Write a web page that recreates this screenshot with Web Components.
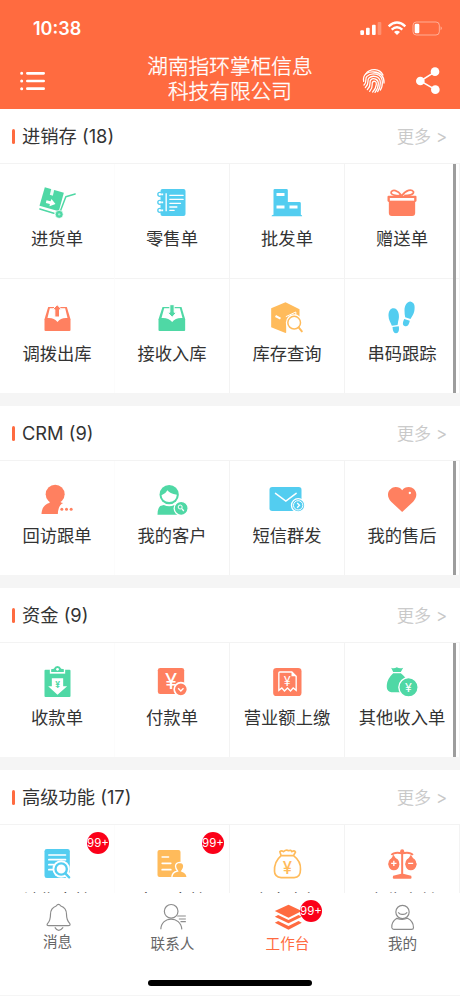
<!DOCTYPE html>
<html lang="zh-CN">
<head>
<meta charset="utf-8">
<meta name="viewport" content="width=device-width, initial-scale=1">
<title>工作台</title>
<style>
html, body {
  height: 100%;
  margin: 0;
  overflow: hidden;
}

body {
  --brand: #ff6b40;
  --coral: #ff8060;
  --green: #4fd8a5;
  --blue: #53cdf0;
  --yellow: #ffbb5b;
  --line: #f3f3f3;
  background: #ffffff;
  color: #333333;
  font-family: Inter, 'Noto Sans CJK SC', sans-serif;
}
</style>
</head>
<body>

<work-bench></work-bench>

<script>
// Icon artwork: view box, then shapes
const ICONS = {
  menu: ['57 211 81 66', `
    <g stroke="currentColor" stroke-width="8" stroke-linecap="round">
      <path d="M82 221H131M82 244H131M82 267H131"/><path d="M65 221h.1M65 244h.1M65 267h.1" stroke-width="9"/>
    </g>`],
  fingerprint: ['396 206 72 78', `
    <g fill="none" stroke="currentColor" stroke-width="3.8" stroke-linecap="round">
      <path d="M407 224Q417 210 435 211Q451 212 459 227"/>
      <path d="M401 246C397 221 417 217 432 218C452 219 463 232 462 251"/>
      <path d="M402 257C413 247 403 238 411 231C424 218 457 221 457 249C457 259 456 266 451 272"/>
      <path d="M406 265C421 249 409 243 417 236C428 226 451 231 451 250C451 263 447 271 443 277"/>
      <path d="M412 271C427 254 416 249 422 242C430 234 445 240 445 252C445 264 440 273 435 279"/>
      <path d="M419 276C433 260 423 254 428 248C433 243 440 247 439 255C438 265 433 273 428 278"/>
    </g>`],
  share: ['554 200 78 87', `
    <path d="M615 217L570 245L615 271" fill="none" stroke="currentColor" stroke-width="4.5"/>
    <g fill="currentColor"><circle cx="614" cy="217" r="13"/><circle cx="570" cy="245" r="13"/><circle cx="615" cy="271" r="13"/></g>`],
  signal: ['387 60 69 48', `
    <g fill="currentColor"><rect x="391" y="91" width="11" height="14" rx="3"/><rect x="408" y="83" width="11" height="22" rx="3"/>
    <rect x="426" y="74" width="11" height="31" rx="3"/><rect x="443" y="66" width="11" height="39" rx="3" opacity=".25"/></g>`],
  wifi: ['471 60 60 48', `
    <g fill="none" stroke="currentColor" stroke-width="7"><path d="M476 79Q501 56 526 79"/><path d="M485 89Q501 75 517 89"/></g>
    <path d="M492 96Q501 89 510 96L501 105Z" fill="currentColor"/>`],
  battery: ['543 60 96 48', `
    <rect x="549" y="66" width="79" height="39" rx="10" fill="none" stroke="currentColor" stroke-width="3" opacity=".45"/>
    <path d="M632 79Q638 85 632 91Z" fill="currentColor" opacity=".6"/><rect x="554" y="71" width="14" height="29" rx="4" fill="currentColor"/>`],

  purchase: ['112.5 84 120 108', `
    <path d="M136 94L193 110L178 166L120 149Z" fill="currentColor"/>
    <path d="M156 95L165 98L160 119L151 116Z" fill="#fff" opacity=".9"/>
    <path d="M141 133L153 136L156 129L168 144L150 151L151 144L139 141Z" fill="#fff"/>
    <path d="M121 159L163 172M183 164L199 122L227 114" stroke="currentColor" stroke-width="4.5" fill="none" stroke-linecap="round" stroke-linejoin="round"/>
    <circle cx="179" cy="175" r="12" fill="currentColor" stroke="#fff" stroke-width="2"/><circle cx="179" cy="175" r="3.5" fill="#fff" opacity=".5"/>`],
  retail: ['457.5 84 120 108', `
    <rect x="483" y="99" width="75" height="81" rx="6" fill="currentColor"/>
    <g fill="#fff" stroke="currentColor" stroke-width="4"><circle cx="481" cy="115" r="6"/><circle cx="481" cy="139" r="6"/><circle cx="481" cy="163" r="6"/></g>
    <path d="M485 115h6M485 139h6M485 163h6" stroke="#fff" stroke-width="5"/>
    <path d="M500 112V166" stroke="#fff" stroke-width="4"/>
    <path d="M511 118H551M511 130H551M511 142H543M511 153H532M511 163H524" stroke="#fff" stroke-width="4" stroke-linecap="round"/>`],
  wholesale: ['112.5 84 120 108', `
    <path d="M136 99H171Q175 99 175 103V138H210Q214 138 214 142V176Q218 176 218 181H126Q126 176 132 176V103Q132 99 136 99Z" fill="currentColor"/>
    <path d="M141 115.5H165M141 153H165M180 153H204" stroke="#fff" stroke-width="9"/>`],
  gift: ['457.5 84 120 108', `
    <g fill="none" stroke="currentColor" stroke-width="5"><path d="M517 119C503 101 490 100 485 108C482 116 498 120 517 119"/><path d="M517 119C530 101 546 99 552 107C554 117 536 119 524 119"/><path d="M514 115L508 119"/></g>
    <path d="M477 119H558Q561 119 561 122V134Q561 137 557 138V171Q557 180 548 180H487Q478 180 478 171V138Q474 137 474 134V122Q474 119 477 119Z" fill="currentColor"/>
    <path d="M481 130H554" stroke="#fff" stroke-width="8"/>`],
  trayOut: ['112.5 69 120 108', `
    <path d="M146 93H202L213 130V162Q213 165 210 165H138Q135 165 135 162V130Z" fill="currentColor"/>
    <path d="M151 97H197L204 126Q184 124 174 138Q163 124 144 126Z" fill="#fff"/>
    <path d="M173 86L187 101H180V123H166V101H159Z" fill="currentColor" stroke="#fff" stroke-width="3"/>`],
  trayIn: ['457.5 69 120 108', `
    <path d="M489 93H546L557 130V162Q557 165 554 165H480Q477 165 477 162V130Z" fill="currentColor"/>
    <path d="M494 97H541L549 126Q529 124 518 138Q506 124 486 126Z" fill="#fff"/>
    <path d="M518 124L531 109H524V86H511V109H504Z" fill="currentColor" stroke="#fff" stroke-width="3"/>`],
  stock: ['112.5 69 120 108', `
    <path d="M125 97L168 79L210 100V153L168 171L125 154Z" fill="currentColor"/>
    <path d="M138 120L153 128" stroke="#fff" stroke-width="6"/><path d="M169 122L199 108V118" stroke="#fff" stroke-width="3" fill="none"/>
    <circle cx="194" cy="140" r="25" fill="#fff"/><path d="M170 140V171L206 175L224 162V130Z" fill="#fff"/>
    <circle cx="194" cy="140" r="19" fill="none" stroke="currentColor" stroke-width="4.5"/><path d="M208 155L217 166" stroke="currentColor" stroke-width="6" stroke-linecap="round"/>`],
  steps: ['457.5 69 120 108', `
    <g fill="currentColor"><path d="M492 97C507 97 512 120 506 136Q505 145 504 147L487 149C484 139 477 132 477 119C477 105 483 97 492 97Z"/>
    <path d="M489 153L508 151Q511 171 500 172Q490 172 489 153Z"/>
    <path d="M544 77C535 75 525 87 525 103Q525 114 527 124L543 129C548 119 553 116 555 101C557 87 553 79 544 77Z"/>
    <path d="M524 129L541 134Q537 154 525 150Q516 147 524 129Z"/></g>`],

  visit: ['112.5 198 120 108', `
    <g fill="currentColor"><circle cx="167" cy="238" r="28.5"/><path d="M126 297C127 276 138 267 150 264L152 250H181Q178 262 191 264Q176 271 175 297Z"/>
    <circle cx="187" cy="283" r="4.5"/><circle cx="201" cy="283" r="4.5"/><circle cx="215" cy="283" r="4.5"/></g>`],
  customer: ['457.5 198 120 108', `
    <circle cx="509" cy="239" r="29" fill="currentColor"/><path d="M486 241Q498 237 504 226Q510 236 532 239Q530 260 509 261Q488 260 486 241Z" fill="#fff"/>
    <path d="M474 299Q474 280 482 273L493 270Q509 278 525 270L534 272V299Z" fill="currentColor"/>
    <circle cx="545" cy="280" r="21" fill="currentColor" stroke="#fff" stroke-width="4"/><circle cx="542" cy="276" r="6" fill="none" stroke="#fff" stroke-width="3"/><path d="M547 281L553 288" stroke="#fff" stroke-width="4"/>`],
  sms: ['112.5 198 120 108', `
    <rect x="120" y="216" width="96" height="72" rx="8" fill="currentColor"/><path d="M138 235L169 258L200 235" fill="none" stroke="#fff" stroke-width="4.5" stroke-linecap="round"/>
    <circle cx="206" cy="271" r="20" fill="currentColor" stroke="#fff" stroke-width="4"/><circle cx="206" cy="271" r="14" fill="none" stroke="#fff" stroke-width="3"/><path d="M203 264L210 271L203 278" fill="none" stroke="#fff" stroke-width="4"/>`],
  heart: ['457.5 198 120 108', `
    <path d="M518 291L485 260C463 236 484 215 499 216Q511 216 518 226Q525 216 538 216C554 216 572 236 551 260Z" fill="currentColor"/><circle cx="541" cy="234" r="3.5" fill="#fff"/>`],

  receipt: ['112.5 189 120 108', `
    <rect x="135" y="209" width="78" height="82" rx="3" fill="currentColor"/>
    <path d="M151 207V221H197V207" fill="#fff"/><path d="M155 216V208Q160 206 163 206Q166 198 174 198Q182 198 185 206Q192 206 193 208V216Z" fill="currentColor"/><circle cx="174" cy="208" r="4" fill="#fff"/>
    <path d="M157 235H191V259H203L174 284L146 259H157Z" fill="#fff"/><text x="174" y="263" font-size="25" font-weight="700" text-anchor="middle" fill="currentColor">¥</text>`],
  payment: ['457.5 189 120 108', `
    <rect x="475" y="204" width="79" height="78" rx="7" fill="currentColor"/><text x="515" y="267" font-size="66" text-anchor="middle" fill="#fff">¥</text>
    <circle cx="544" cy="268" r="20" fill="currentColor" stroke="#fff" stroke-width="5"/><path d="M536 265L544 273L552 265" fill="none" stroke="#fff" stroke-width="4"/>`],
  turnover: ['112.5 189 120 108', `
    <rect x="131" y="204" width="85" height="84" rx="10" fill="currentColor"/>
    <path d="M148 219Q148 216 151 216H187L200 229V271L191 264L183 273L174 264L165 273L157 264L148 271Z" fill="none" stroke="#fff" stroke-width="4"/><path d="M186 215V229H201Z" fill="#fff"/>
    <text x="173" y="257" font-size="38" text-anchor="middle" fill="#fff">¥</text>`],
  income: ['457.5 189 120 108', `
    <path d="M485 203Q493 207 502 202Q511 207 521 203L514 216H491ZM491 220H514C526 230 535 238 534 262Q534 277 511 277H492C473 277 471 266 472 254Q474 236 491 220Z" fill="currentColor"/>
    <circle cx="537" cy="262" r="29" fill="currentColor" stroke="#fff" stroke-width="4"/><text x="537" y="275" font-size="37" text-anchor="middle" fill="#fff">¥</text>`],

  audit: ['112.5 195 120 108', `
    <rect x="135" y="207" width="76" height="87" rx="7" fill="currentColor"/><path d="M148 225H198M148 239H198M148 254H162M148 269H159" stroke="#fff" stroke-width="5" stroke-linecap="round"/>
    <circle cx="185" cy="267" r="26" fill="#fff"/><path d="M190 281L203 298H216V276Z" fill="#fff"/><circle cx="185" cy="267" r="17" fill="none" stroke="currentColor" stroke-width="7"/><path d="M198 281L209 292" stroke="currentColor" stroke-width="7" stroke-linecap="round"/>`],
  staff: ['457.5 195 120 108', `
    <rect x="474" y="210" width="69" height="81" rx="6" fill="currentColor"/><path d="M488 231H507M488 250H514M488 269H514" stroke="#fff" stroke-width="5" stroke-linecap="round"/>
    <path d="M517 293Q517 277 534 273Q528 265 528 258Q529 248 540 247Q552 247 553 258Q553 266 547 273Q563 278 563 293Z" fill="currentColor" stroke="#fff" stroke-width="4"/>`],
  moneybag: ['112.5 195 120 108', `
    <path d="M155 227L151 215Q156 210 162 215Q170 208 177 212Q185 209 187 215Q195 210 198 216L192 227C204 236 214 250 213 268Q213 293 194 293H155Q135 291 135 274C134 253 143 237 155 227H193" fill="none" stroke="currentColor" stroke-width="5" stroke-linejoin="round"/>
    <text x="174" y="283" font-size="50" font-weight="500" text-anchor="middle" fill="currentColor">¥</text>`],
  balance: ['457.5 195 120 108', `
    <g fill="currentColor"><circle cx="518" cy="214" r="6"/><path d="M515 212H521V281L545 287Q548 296 543 296H493Q488 296 491 287L515 281Z"/>
    <path d="M492 224L476 252Q479 271 493 271Q508 271 510 252ZM544 224L527 252Q530 271 544 271Q558 271 562 252Z"/><circle cx="493" cy="249" r="16"/><circle cx="544" cy="249" r="16"/></g>
    <path d="M486 225Q494 215 518 220Q542 215 550 225" fill="none" stroke="currentColor" stroke-width="6"/>
    <path d="M485 250H501M493 242V258M536 250H551" stroke="#fff" stroke-width="4"/>`],

  bell: ['112.5 366 120 90', `
    <g fill="none" stroke="currentColor" stroke-width="3.5"><path d="M167 378Q174 368 181 378C193 382 198 390 198 403C198 420 202 425 208 431Q211 437 203 437H145Q137 437 141 431C147 425 150 417 150 403C150 390 156 382 167 378Z"/><path d="M163 442Q174 460 188 442"/></g>`],
  contact: ['457.5 366 120 90', `
    <g fill="none" stroke="currentColor" stroke-width="3.5"><circle cx="512" cy="394" r="20.5"/><path d="M481 448C482 407 541 407 544 448M530 408H556M535 417H556M540 425H556"/></g>`],
  layers: ['112.5 366 120 90', `
    <g fill="currentColor"><path d="M133 393L174 374L214 393L174 413Z"/><path d="M133 410L143 405L174 420L204 405L214 410L174 430Z"/><path d="M133 428L143 423L174 438L204 423L214 428L174 449Z"/></g>`],
  mine: ['457.5 366 120 90', `
    <g fill="none" stroke="currentColor" stroke-width="3.5"><circle cx="516" cy="396" r="20"/><path d="M503 397Q509 404 516 403Q524 404 530 397M499 415C487 423 483 433 484 443Q485 448 490 448H543Q549 448 549 443C549 430 543 421 531 415Q516 421 499 415Z"/></g>`]
};

const SECTIONS = [
  {title: '进销存', count: 18, items: [
    {icon: 'purchase', label: '进货单', color: 'green'},
    {icon: 'retail', label: '零售单', color: 'blue'},
    {icon: 'wholesale', label: '批发单', color: 'blue'},
    {icon: 'gift', label: '赠送单', color: 'coral'},
    {icon: 'trayOut', label: '调拨出库', color: 'coral'},
    {icon: 'trayIn', label: '接收入库', color: 'green'},
    {icon: 'stock', label: '库存查询', color: 'yellow'},
    {icon: 'steps', label: '串码跟踪', color: 'blue'}
  ]},
  {title: 'CRM', count: 9, items: [
    {icon: 'visit', label: '回访跟单', color: 'coral'},
    {icon: 'customer', label: '我的客户', color: 'green'},
    {icon: 'sms', label: '短信群发', color: 'blue'},
    {icon: 'heart', label: '我的售后', color: 'coral'}
  ]},
  {title: '资金', count: 9, items: [
    {icon: 'receipt', label: '收款单', color: 'green'},
    {icon: 'payment', label: '付款单', color: 'coral'},
    {icon: 'turnover', label: '营业额上缴', color: 'coral'},
    {icon: 'income', label: '其他收入单', color: 'green'}
  ]},
  {title: '高级功能', count: 17, items: [
    {icon: 'audit', label: '销售审核', color: 'blue', badge: '99+'},
    {icon: 'staff', label: '客服审核', color: 'yellow', badge: '99+'},
    {icon: 'moneybag', label: '资金余额', color: 'yellow'},
    {icon: 'balance', label: '应收应付', color: 'coral'}
  ]}
];

// Attach an open shadow root holding the given markup
function attach( host, html ) {
  const template = document.createElement( 'template' );
  template.innerHTML = html;
  const root = host.attachShadow( {mode: 'open'} );
  root.appendChild( template.content.cloneNode( true ) );
  return root;
}

class AppIcon extends HTMLElement {
  connectedCallback() {
    if( this.shadowRoot ) return;
    const [box, art] = ICONS[this.getAttribute( 'name' )];
    attach( this, `
    <style>
    :host {
      display: block;
      flex: none;
    }

    svg {
      display: block;
      height: 100%;
      width: 100%;
    }
    </style>
    <svg viewBox="${box}" fill="none" aria-hidden="true">${art}</svg>
    ` );
  }
}

class CountBadge extends HTMLElement {
  constructor() {
    super();
    attach( this, `
    <style>
    :host {
      align-items: center;
      background: #fb0019;
      border-radius: 11px;
      color: #ffffff;
      display: flex;
      font-size: 11.5px;
      height: 22px;
      justify-content: center;
      position: absolute;
      width: 22px;
    }
    </style>
    <slot></slot>
    ` );
  }
}

class StatusBar extends HTMLElement {
  constructor() {
    super();
    attach( this, `
    <style>
    :host {
      box-sizing: border-box;
      display: flex;
      height: 52px;
      justify-content: space-between;
      padding: 20px 17px 0 33px;
    }

    time {
      font-size: 18px;
      font-weight: 600;
      line-height: 18px;
    }

    div {
      display: flex;
      gap: 5px;
      height: 16px;
    }

    .signal { width: 23px; }
    .wifi { width: 20px; }
    .battery { margin-left: -1px; width: 32px; }
    </style>
    <time>10:38</time>
    <div>
      <app-icon class="signal" name="signal"></app-icon>
      <app-icon class="wifi" name="wifi"></app-icon>
      <app-icon class="battery" name="battery"></app-icon>
    </div>
    ` );
  }
}

class AppHeader extends HTMLElement {
  constructor() {
    super();
    attach( this, `
    <style>
    :host {
      background: var( --brand );
      color: #ffffff;
      display: block;
      flex: none;
      height: 109px;
    }

    nav {
      align-items: center;
      display: grid;
      grid-template-columns: 1fr 170px 1fr;
      height: 57px;
      padding: 0 19px;
    }

    h1 {
      -webkit-text-stroke: 0.35px currentColor;
      font-size: 20.7px;
      font-weight: 300;
      line-height: 25px;
      margin: -4px 0 0;
      text-align: center;
    }

    div {
      align-items: center;
      display: flex;
      gap: 29px;
      justify-content: flex-end;
    }

    .menu { height: 22px; width: 27px; }
    .finger { height: 26px; width: 24px; }
    .share { height: 29px; width: 26px; }
    </style>
    <status-bar></status-bar>
    <nav>
      <app-icon class="menu" name="menu"></app-icon>
      <h1><slot></slot></h1>
      <div>
        <app-icon class="finger" name="fingerprint"></app-icon>
        <app-icon class="share" name="share"></app-icon>
      </div>
    </nav>
    ` );
  }
}

class FunctionCell extends HTMLElement {
  connectedCallback() {
    if( this.shadowRoot ) return;
    const badge = this.getAttribute( 'badge' );
    attach( this, `
    <style>
    :host {
      align-items: center;
      border-bottom: solid 1px var( --line );
      border-right: solid 1px var( --line );
      box-sizing: border-box;
      display: flex;
      flex-direction: column;
      min-width: 0;
      padding-top: 20px;
      position: relative;
    }

    app-icon {
      color: var( --${this.getAttribute( 'color' )} );
      height: 36px;
      width: 40px;
    }

    p {
      font-size: 17.3px;
      line-height: 24px;
      margin: var( --label-gap, 7px ) 0 0;
      white-space: nowrap;
    }

    count-badge {
      right: 5px;
      top: 7px;
    }
    </style>
    <app-icon name="${this.getAttribute( 'icon' )}"></app-icon>
    <p><slot></slot></p>
    ${badge ? `<count-badge>${badge}</count-badge>` : ''}
    ` );
  }
}

class FunctionSection extends HTMLElement {
  set data( value ) {
    const rows = value.items.length / 4;
    attach( this, `
    <style>
    :host {
      border-bottom: solid 13px #f5f5f5;
      display: block;
      flex: none;
    }

    :host( :last-of-type ) {
      --label-gap: 8px;
    }

    header {
      align-items: center;
      border-bottom: solid 1px var( --line );
      box-sizing: border-box;
      display: flex;
      height: 55px;
      padding: 0 13px 0 12px;
    }

    header::before {
      background: var( --brand );
      border-radius: 2px;
      content: '';
      height: 15px;
      margin-right: 7px;
      width: 3px;
    }

    h2 {
      flex-grow: 1;
      font-size: 18.3px;
      font-weight: 400;
      line-height: 26px;
      margin: 0;
    }

    a {
      -webkit-text-stroke: 0.25px currentColor;
      color: #c6c6c6;
      font-size: 17px;
      font-weight: 300;
      margin-top: -2px;
    }

    .grid {
      display: grid;
      grid-auto-rows: 115px;
      grid-template-columns: repeat( 4, 115px );
      height: ${rows * 115 - 1}px;
      overflow: hidden;
      position: relative;
    }

    .grid function-cell:nth-of-type( 4n + 1 ) {
      border-right-color: #fcfcfc;
    }

    /* Scroll thumb lies over the last column */
    .thumb {
      background: #9d9d9d;
      bottom: 0;
      position: absolute;
      right: 4px;
      top: 0;
      width: 3px;
    }
    </style>
    <header>
      <h2>${value.title} (${value.count})</h2>
      <a>更多 &gt;</a>
    </header>
    <div class="grid">
      ${value.items.map( item => `
      <function-cell icon="${item.icon}" color="${item.color}" ${item.badge ? `badge="${item.badge}"` : ''}>${item.label}</function-cell>` ).join( '' )}
      ${value.items[0].badge ? '' : '<div class="thumb"></div>'}
    </div>
    ` );
  }
}

class TabItem extends HTMLElement {
  connectedCallback() {
    if( this.shadowRoot ) return;
    const badge = this.getAttribute( 'badge' );
    attach( this, `
    <style>
    :host {
      align-items: center;
      color: #666666;
      display: flex;
      flex: 1;
      flex-direction: column;
      position: relative;
    }

    :host( [active] ) {
      color: var( --brand );
    }

    app-icon {
      color: #8c8c8c;
      height: 30px;
      width: 40px;
    }

    :host( [active] ) app-icon {
      color: var( --brand );
    }

    span {
      font-size: 14.6px;
      line-height: 20px;
      margin-top: 2px;
    }

    :host( [icon='bell'] ) span {
      margin-top: 0;
    }

    count-badge {
      right: 23px;
      top: -2px;
    }
    </style>
    <app-icon name="${this.getAttribute( 'icon' )}"></app-icon>
    <span><slot></slot></span>
    ${badge ? `<count-badge>${badge}</count-badge>` : ''}
    ` );
  }
}

class TabBar extends HTMLElement {
  constructor() {
    super();
    attach( this, `
    <style>
    :host {
      background: #ffffff;
      border-bottom: solid 1px #f5f5f5;
      box-sizing: border-box;
      display: flex;
      flex: none;
      flex-direction: column;
      height: 103px;
      justify-content: space-between;
      padding: 9px 0 9px;
    }

    nav {
      display: flex;
    }

    .home {
      align-self: center;
      background: #000000;
      border-radius: 3px;
      height: 6px;
      width: 164px;
    }
    </style>
    <nav><slot></slot></nav>
    <div class="home"></div>
    ` );
  }
}

class WorkBench extends HTMLElement {
  constructor() {
    super();
    const root = attach( this, `
    <style>
    :host {
      display: flex;
      flex-direction: column;
      height: 996px;
      width: 460px;
    }

    main {
      display: flex;
      flex: 1;
      flex-direction: column;
      min-height: 0;
      overflow: hidden;
    }
    </style>
    <app-header>湖南指环掌柜信息<br>科技有限公司</app-header>
    <main></main>
    <tab-bar>
      <tab-item icon="bell">消息</tab-item>
      <tab-item icon="contact">联系人</tab-item>
      <tab-item icon="layers" badge="99+" active>工作台</tab-item>
      <tab-item icon="mine">我的</tab-item>
    </tab-bar>
    ` );

    // Sections
    const main = root.querySelector( 'main' );
    for( const data of SECTIONS ) {
      const section = document.createElement( 'function-section' );
      section.data = data;
      main.appendChild( section );
    }
  }
}

window.customElements.define( 'app-icon', AppIcon );
window.customElements.define( 'count-badge', CountBadge );
window.customElements.define( 'status-bar', StatusBar );
window.customElements.define( 'app-header', AppHeader );
window.customElements.define( 'function-cell', FunctionCell );
window.customElements.define( 'function-section', FunctionSection );
window.customElements.define( 'tab-item', TabItem );
window.customElements.define( 'tab-bar', TabBar );
window.customElements.define( 'work-bench', WorkBench );
</script>
</body>
</html>
